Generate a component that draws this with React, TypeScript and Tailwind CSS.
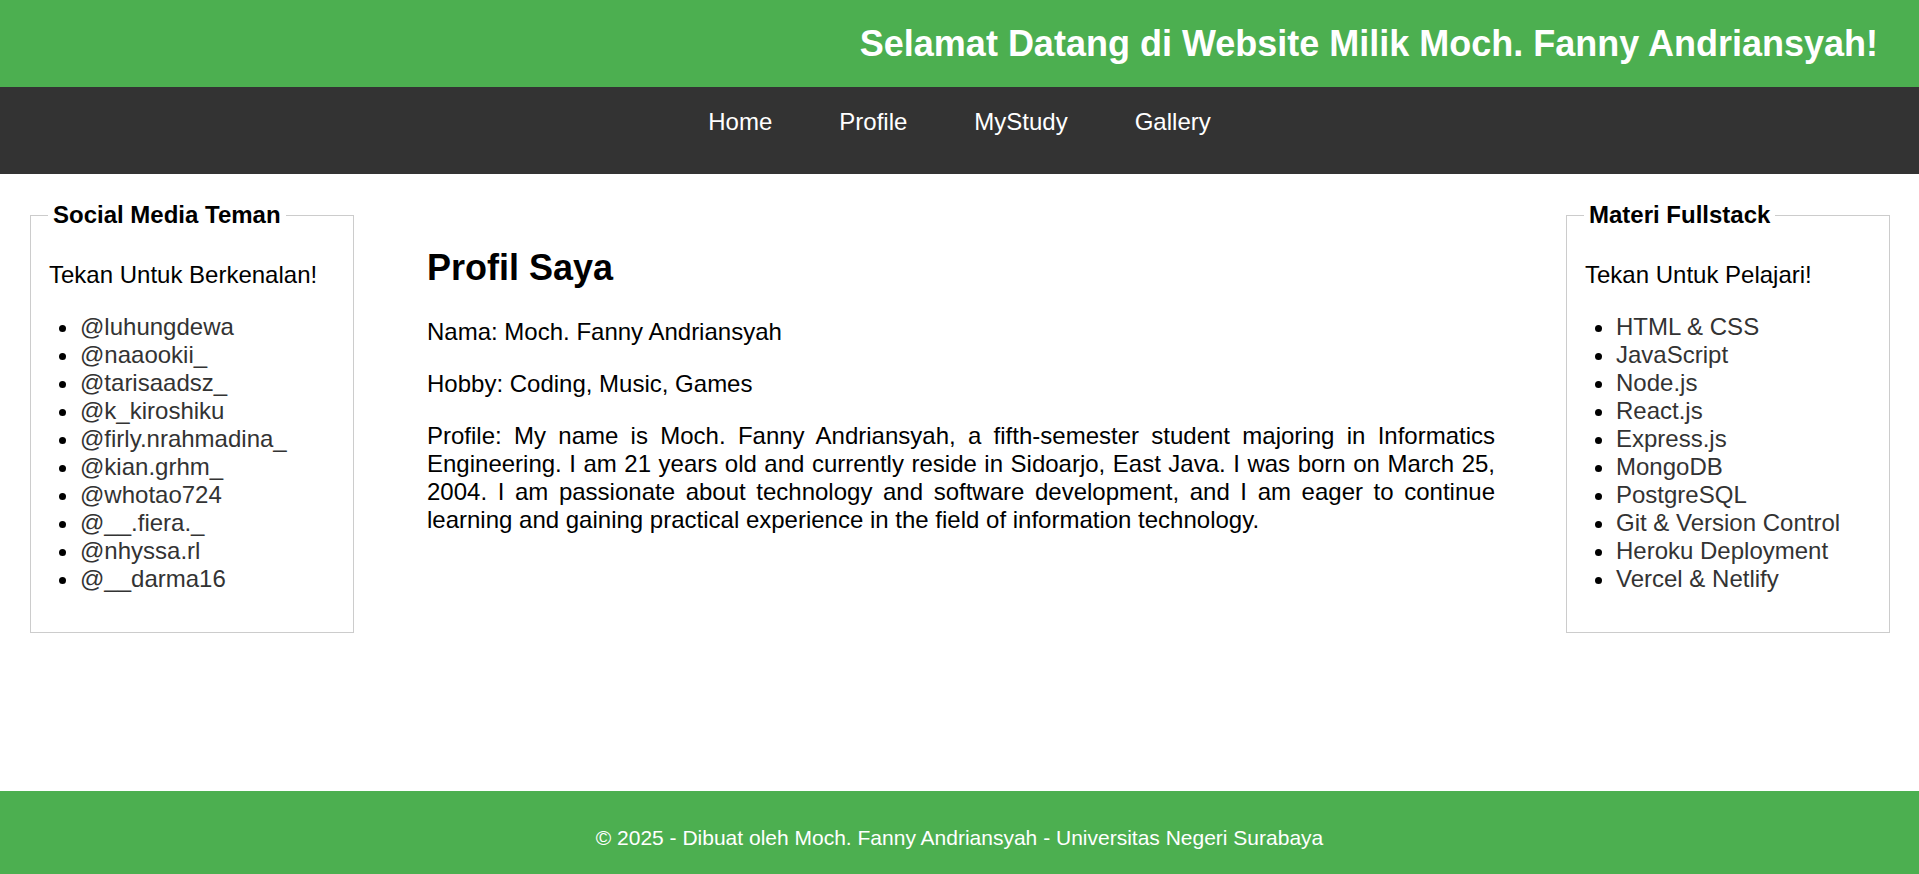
const friends = [
  "@luhungdewa",
  "@naaookii_",
  "@tarisaadsz_",
  "@k_kiroshiku",
  "@firly.nrahmadina_",
  "@kian.grhm_",
  "@whotao724",
  "@__.fiera._",
  "@nhyssa.rl",
  "@__darma16",
];

const materials = [
  "HTML & CSS",
  "JavaScript",
  "Node.js",
  "React.js",
  "Express.js",
  "MongoDB",
  "PostgreSQL",
  "Git & Version Control",
  "Heroku Deployment",
  "Vercel & Netlify",
];

const navLinks = ["Home", "Profile", "MyStudy", "Gallery"];

const SideBox = ({
  title,
  intro,
  items,
}: {
  title: string;
  intro: string;
  items: string[];
}) => (
  <fieldset className="w-[324px] shrink-0 border border-[#ccc] px-[18px] pt-[8px] pb-[15px]">
    <legend className="ml-[-1px] px-[5px] text-[24px] font-bold leading-[28px] text-black">
      {title}
    </legend>
    <p className="my-[24px] text-[24px] leading-[28px] text-black">{intro}</p>
    <ul className="mb-[24px] list-disc pl-[31px] text-[24px] leading-[28px]">
      {items.map((item) => (
        <li key={item}>
          <a href="#" className="text-[#333] no-underline">
            {item}
          </a>
        </li>
      ))}
    </ul>
  </fieldset>
);

export default function App() {
  return (
    <div
      className="flex min-h-screen flex-col bg-white"
      style={{ fontFamily: '"Liberation Sans", Arial, sans-serif' }}
    >
      {/* Header */}
      <header className="flex h-[87px] items-center justify-end bg-[#4CAF50] pr-[41px] pt-[1px]">
        <h1 className="text-[36px] font-bold text-white">
          Selamat Datang di Website Milik Moch. Fanny Andriansyah!
        </h1>
      </header>

      {/* Nav */}
      <nav className="h-[87px] bg-[#333] pt-[21px]">
        <ul className="flex justify-center gap-[67px] text-[24px] leading-[28px]">
          {navLinks.map((link) => (
            <li key={link}>
              <a href="#" className="text-white no-underline">
                {link}
              </a>
            </li>
          ))}
        </ul>
      </nav>

      {/* Content */}
      <div className="flex flex-1 items-start pl-[30px] pr-[29px] pt-[27px]">
        <SideBox
          title="Social Media Teman"
          intro="Tekan Untuk Berkenalan!"
          items={friends}
        />

        <main className="flex-1 pl-[73px] pr-[71px] pt-[46px] text-black">
          <h2 className="mb-[30px] text-[36px] font-bold leading-[41px]">
            Profil Saya
          </h2>
          <p className="mb-[24px] text-[24px] leading-[28px]">
            Nama: Moch. Fanny Andriansyah
          </p>
          <p className="mb-[24px] text-[24px] leading-[28px]">
            Hobby: Coding, Music, Games
          </p>
          <p className="mb-[24px] text-justify text-[24px] leading-[28px]">
            Profile: My name is Moch. Fanny Andriansyah, a fifth-semester
            student majoring in Informatics Engineering. I am 21 years old and
            currently reside in Sidoarjo, East Java. I was born on March 25,
            2004. I am passionate about technology and software development,
            and I am eager to continue learning and gaining practical
            experience in the field of information technology.
          </p>
        </main>

        <SideBox
          title="Materi Fullstack"
          intro="Tekan Untuk Pelajari!"
          items={materials}
        />
      </div>

      {/* Footer */}
      <footer className="bg-[#4CAF50] pt-[35px] pb-[24px] text-center">
        <p className="text-[21px] leading-[24px] text-white">
          © 2025 - Dibuat oleh Moch. Fanny Andriansyah - Universitas Negeri
          Surabaya
        </p>
      </footer>
    </div>
  );
}
